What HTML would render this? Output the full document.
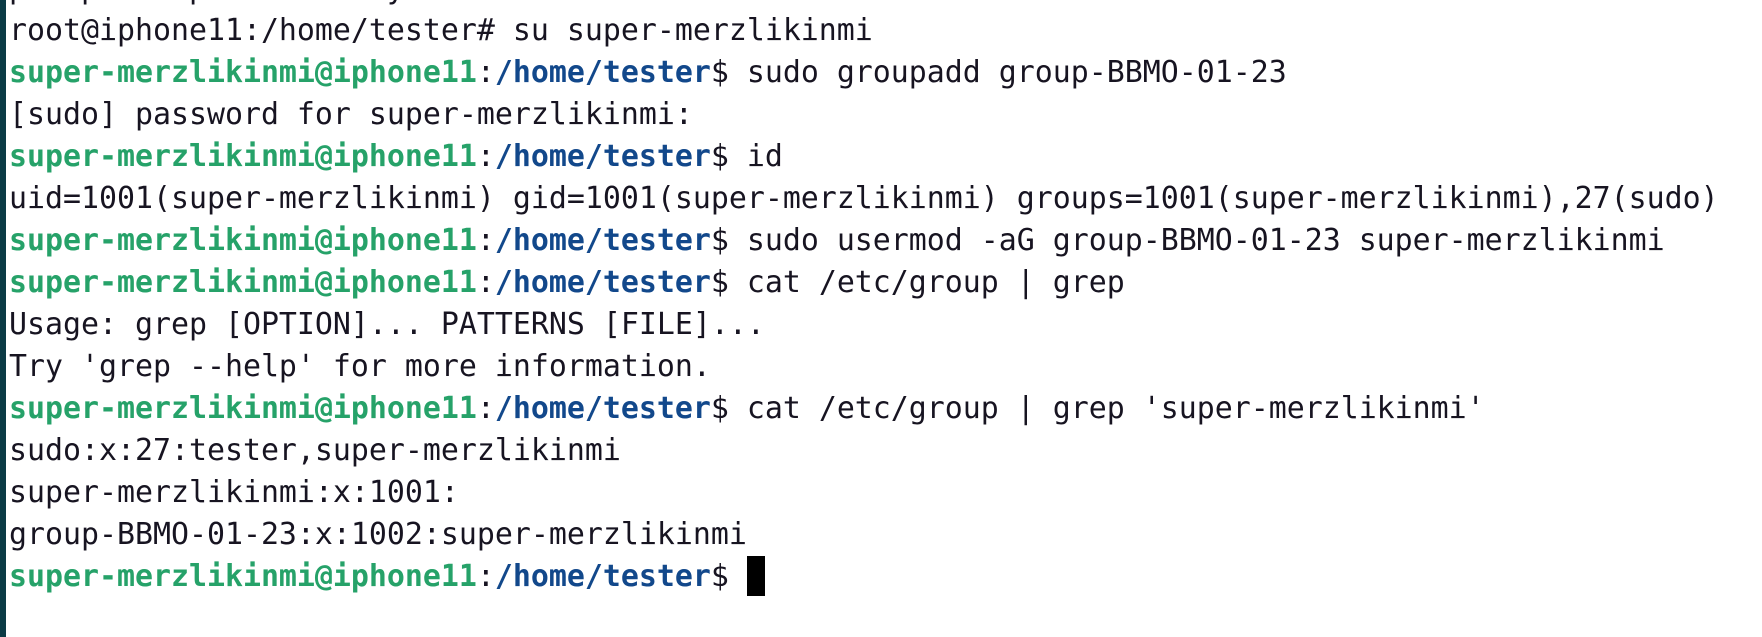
<!DOCTYPE html>
<html><head><meta charset="utf-8"><style>
html,body{margin:0;padding:0;width:1762px;height:637px;overflow:hidden;background:#fff}
.bar{position:absolute;left:0;top:0;width:6px;height:637px;background:#0b3b45}
pre{position:absolute;left:9px;top:-32px;margin:0;font-family:"DejaVu Sans Mono","Liberation Mono",monospace;font-size:29.9px;line-height:42px;color:#171421}
.g{color:#26a269;font-weight:bold}.b{color:#12488b;font-weight:bold}
.c{display:inline-block;width:18px;height:40px;background:#000;vertical-align:-10px}
</style></head><body><div class="bar"></div>
<pre>p   p     p          y
root@iphone11:/home/tester# su super-merzlikinmi
<span class="g">super-merzlikinmi@iphone11</span>:<span class="b">/home/tester</span>$ sudo groupadd group-BBMO-01-23
[sudo] password for super-merzlikinmi:
<span class="g">super-merzlikinmi@iphone11</span>:<span class="b">/home/tester</span>$ id
uid=1001(super-merzlikinmi) gid=1001(super-merzlikinmi) groups=1001(super-merzlikinmi),27(sudo)
<span class="g">super-merzlikinmi@iphone11</span>:<span class="b">/home/tester</span>$ sudo usermod -aG group-BBMO-01-23 super-merzlikinmi
<span class="g">super-merzlikinmi@iphone11</span>:<span class="b">/home/tester</span>$ cat /etc/group | grep
Usage: grep [OPTION]... PATTERNS [FILE]...
Try 'grep --help' for more information.
<span class="g">super-merzlikinmi@iphone11</span>:<span class="b">/home/tester</span>$ cat /etc/group | grep 'super-merzlikinmi'
sudo:x:27:tester,super-merzlikinmi
super-merzlikinmi:x:1001:
group-BBMO-01-23:x:1002:super-merzlikinmi
<span class="g">super-merzlikinmi@iphone11</span>:<span class="b">/home/tester</span>$ <span class="c"></span></pre>
</body></html>
